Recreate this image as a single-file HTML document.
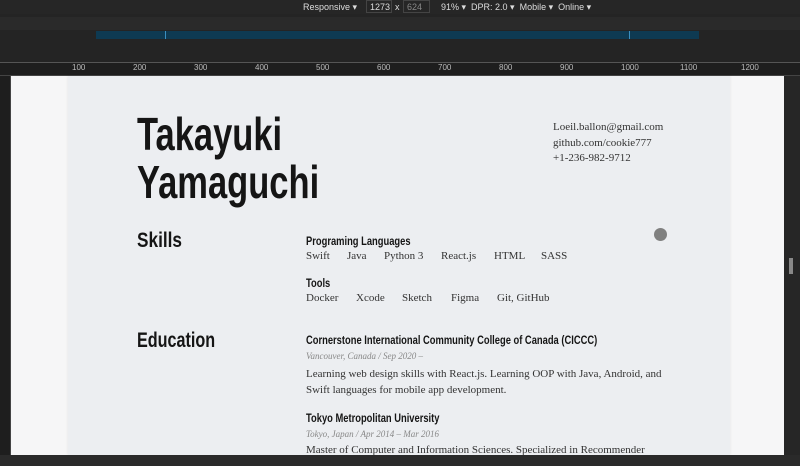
<!DOCTYPE html>
<html><head><meta charset="utf-8"><style>
*{margin:0;padding:0;box-sizing:border-box}
body{width:800px;height:466px;overflow:hidden;background:#242424;position:relative;font-family:"Liberation Serif",serif}
.a{position:absolute;white-space:nowrap}
.h{font-family:"Liberation Sans",sans-serif;font-weight:bold;color:#151515;transform:scaleX(0.78);transform-origin:0 0}
.t{color:#333;font-size:11px}
.top{font-family:"Liberation Sans",sans-serif;font-size:9px;color:#ddd}
</style></head><body>
<div class="a" style="left:0;top:0;width:800px;height:14px;background:#262626"></div>
<div class="a top" style="left:303px;top:2px">Responsive ▾</div>
<div class="a top" style="left:366px;top:0;width:26px;height:13px;border:1px solid #444;padding:1px 3px">1273</div>
<div class="a top" style="left:395px;top:2px">x</div>
<div class="a top" style="left:403px;top:0;width:27px;height:13px;border:1px solid #444;padding:1px 3px;color:#888">624</div>
<div class="a top" style="left:441px;top:2px">91% ▾ &nbsp;DPR: 2.0 ▾ &nbsp;Mobile ▾ &nbsp;Online ▾</div>
<div class="a" style="left:0;top:17px;width:800px;height:13px;background:#2a2a2a"></div>
<div class="a" style="left:96px;top:31px;width:603px;height:8px;background:#0e3a52"></div>
<div class="a" style="left:165px;top:31px;width:1px;height:8px;background:#3a8fc0"></div>
<div class="a" style="left:629px;top:31px;width:1px;height:8px;background:#3a8fc0"></div>
<div class="a" style="left:0;top:62px;width:800px;height:1px;background:#555"></div>
<div class="a" style="left:0;top:63px;width:800px;height:13px;background:#1e1e1e;border-bottom:1px solid #444"></div>
<div class="a top" style="left:72px;top:63px;font-size:8px;color:#bbb;word-spacing:0">
<span style="position:absolute;left:0">100</span><span style="position:absolute;left:61px">200</span><span style="position:absolute;left:122px">300</span><span style="position:absolute;left:183px">400</span><span style="position:absolute;left:244px">500</span><span style="position:absolute;left:305px">600</span><span style="position:absolute;left:366px">700</span><span style="position:absolute;left:427px">800</span><span style="position:absolute;left:488px">900</span><span style="position:absolute;left:549px">1000</span><span style="position:absolute;left:608px">1100</span><span style="position:absolute;left:669px">1200</span></div>
<div class="a" style="left:0;top:76px;width:11px;height:380px;background:#1e1e1e;border-right:1px solid #444"></div>
<div class="a" style="left:11px;top:76px;width:773px;height:379px;background:#f6f6f7"></div>
<div class="a" style="left:68px;top:76px;width:662px;height:379px;background:#eceef1;box-shadow:0 0 3px rgba(0,0,0,.08)"></div>
<div class="a" style="left:784px;top:76px;width:16px;height:390px;background:#262626"></div>
<div class="a" style="left:789px;top:258px;width:4px;height:16px;background:#888"></div>
<div class="a" style="left:0;top:455px;width:800px;height:11px;background:#2a2a2a"></div>
<div class="a h" style="left:137px;top:110px;font-size:46px;line-height:48px;transform:scaleX(0.75)">Takayuki<br>Yamaguchi</div>
<div class="a" style="left:553px;top:120px;font-size:11px;line-height:15.5px;color:#333">Loeil.ballon@gmail.com<br>github.com/cookie777<br>+1-236-982-9712</div>
<div class="a" style="left:654px;top:228px;width:13px;height:13px;border-radius:50%;background:#808080"></div>
<div class="a h" style="left:137px;top:229px;font-size:21px;transform:scaleX(0.82)">Skills</div>
<div class="a h" style="left:306px;top:234px;font-size:12px">Programing Languages</div>
<div class="a t" style="left:306px;top:250px">Swift</div><div class="a t" style="left:347px;top:250px">Java</div><div class="a t" style="left:384px;top:250px">Python 3</div><div class="a t" style="left:441px;top:250px">React.js</div><div class="a t" style="left:494px;top:250px">HTML</div><div class="a t" style="left:541px;top:250px">SASS</div>
<div class="a h" style="left:306px;top:276px;font-size:12px">Tools</div>
<div class="a t" style="left:306px;top:292px">Docker</div><div class="a t" style="left:356px;top:292px">Xcode</div><div class="a t" style="left:402px;top:292px">Sketch</div><div class="a t" style="left:451px;top:292px">Figma</div><div class="a t" style="left:497px;top:292px">Git, GitHub</div>
<div class="a h" style="left:137px;top:329px;font-size:21px;transform:scaleX(0.77)">Education</div>
<div class="a h" style="left:306px;top:333px;font-size:12px">Cornerstone International Community College of Canada (CICCC)</div>
<div class="a" style="left:306px;top:351px;font-size:9px;font-style:italic;color:#888">Vancouver, Canada / Sep 2020 –</div>
<div class="a t" style="left:306px;top:366px;line-height:16px">Learning web design skills with React.js. Learning OOP with Java, Android, and<br>Swift languages for mobile app development.</div>
<div class="a h" style="left:306px;top:411px;font-size:12px">Tokyo Metropolitan University</div>
<div class="a" style="left:306px;top:429px;font-size:9px;font-style:italic;color:#888">Tokyo, Japan / Apr 2014 – Mar 2016</div>
<div class="a t" style="left:306px;top:444px;height:11px;overflow:hidden">Master of Computer and Information Sciences. Specialized in Recommender</div>
</body></html>
